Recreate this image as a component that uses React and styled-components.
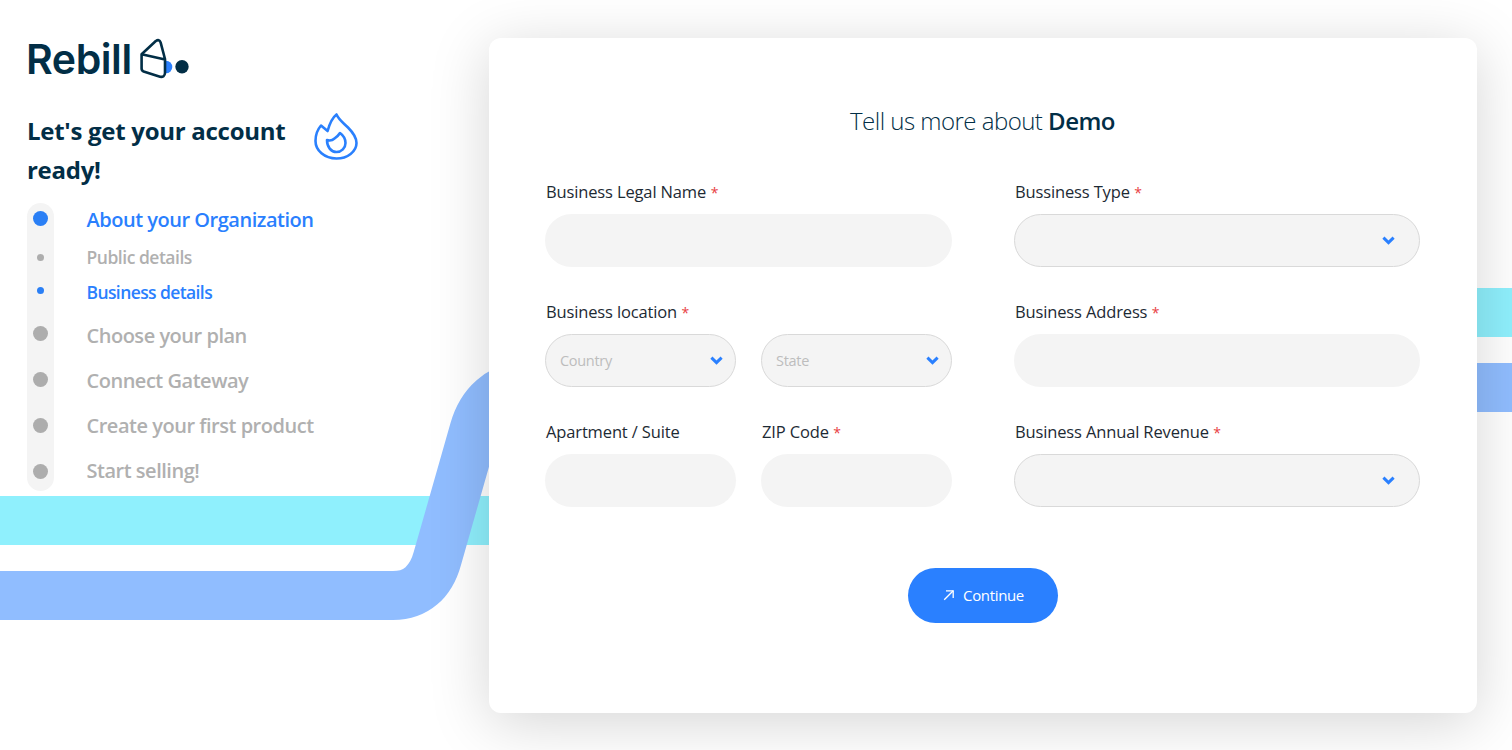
import React from 'react'
import styled, { createGlobalStyle } from 'styled-components'

const GlobalStyle = createGlobalStyle`
	html, body { margin: 0; padding: 0; background: #fff; }
	body { font-family: "Open Sans", "Noto Sans", sans-serif; color: #022e46; }
	* { box-sizing: border-box; }
`

const Page = styled.div`
	position: relative;
	width: 1512px;
	height: 750px;
	overflow: hidden;
	display: flex;
`

const Bands = styled.svg`
	position: absolute;
	top: 0;
	left: 0;
`

const Sidebar = styled.aside`
	position: relative;
	width: 489px;
	padding: 36px 0 0 27px;
`

const Logo = styled.div`
	display: flex;
	align-items: flex-start;
	height: 43px;
`

const LogoWord = styled.span`
	margin-left: -1px;
	font-family: Inter, sans-serif;
	font-weight: 600;
	font-size: 41px;
	line-height: 46px;
	letter-spacing: -0.42px;
	color: #022e46;
`

const LogoSvg = styled.svg`
	margin: 1px 0 0 6px;
`

const Intro = styled.div`
	display: flex;
	align-items: flex-start;
	margin-top: 32px;
`

const Heading = styled.h1`
	margin: 0;
	width: 285px;
	font-size: 24px;
	line-height: 39px;
	font-weight: 700;
	letter-spacing: -0.28px;
	color: #022e46;
`

const FlameSvg = styled.svg`
	margin-top: 1px;
`

const Steps = styled.div`
	display: flex;
	margin-top: 14px;
`

const Rail = styled.div`
	width: 27px;
	height: 288px;
	border-radius: 14px;
	background: #f4f4f4;
	display: flex;
	flex-direction: column;
	align-items: center;
	padding-top: 8px;
`

const Dot = styled.span`
	display: block;
	flex: none;
	width: ${p => p.$small ? 7 : 15}px;
	height: ${p => p.$small ? 7 : 15}px;
	margin-top: ${p => p.$gap}px;
	border-radius: 50%;
	background: ${p => p.$active ? '#2a7ff5' : '#adadad'};
`

const Labels = styled.div`
	margin-left: 32.5px;
	padding-top: 2px;
	display: flex;
	flex-direction: column;
`

const StepLabel = styled.div`
	height: ${p => p.$height}px;
	line-height: 30px;
	font-size: ${p => p.$sub ? 17.5 : 20}px;
	font-weight: 600;
	letter-spacing: ${p => p.$active && p.$sub ? -0.6 : -0.48}px;
	white-space: nowrap;
	color: ${p => p.$active ? '#2a7ffe' : '#b0b0b0'};
`

const Card = styled.main`
	position: relative;
	width: 988px;
	height: 675px;
	margin-top: 38px;
	padding: 66px 57px 0 56px;
	background: #fff;
	border-radius: 12px;
	box-shadow: 0 10px 60px rgba(0, 0, 0, 0.17);
	display: flex;
	flex-direction: column;
	align-items: stretch;
`

const Title = styled.h2`
	margin: 0;
	height: 34px;
	text-align: center;
	font-size: 24px;
	line-height: 34px;
	font-weight: 300;
	letter-spacing: -0.52px;
	color: #022e46;
	b { font-weight: 600; }
`

const FormGrid = styled.div`
	margin-top: 39px;
	display: grid;
	grid-template-columns: 407px 406px;
	column-gap: 62px;
	row-gap: 30px;
`

const Split = styled.div`
	display: grid;
	grid-template-columns: 191px 191px;
	column-gap: 25px;
`

const Field = styled.div`
	display: flex;
	flex-direction: column;
	min-width: 0;
`

const Label = styled.label`
	display: block;
	height: 37px;
	padding: 2px 0 0 1px;
	line-height: 26px;
	font-size: 16.5px;
	letter-spacing: -0.14px;
	color: #1d2a34;
	span { color: #e8403f; font-size: 14px; margin-left: 1px; }
`

const TextInput = styled.input`
	display: block;
	width: 100%;
	height: 53px;
	border: none;
	outline: none;
	border-radius: 27px;
	background: #f4f4f4;
	padding: 0 15px;
	font: inherit;
`

const SelectBox = styled.div`
	display: flex;
	align-items: center;
	justify-content: space-between;
	height: 53px;
	border: 1px solid #d9d9d9;
	border-radius: 27px;
	background: #f4f4f4;
	padding: 0 ${p => p.$wide ? 24 : 12}px 0 14px;
	font-size: 14.5px;
	letter-spacing: -0.3px;
	color: #bdbdbd;
`

const Actions = styled.div`
	display: flex;
	justify-content: center;
	margin-top: 61px;
`

const ContinueButton = styled.button`
	display: flex;
	align-items: center;
	justify-content: center;
	gap: 8px;
	width: 150px;
	height: 55px;
	padding: 0 0 1px 2px;
	border: none;
	border-radius: 28px;
	background: #2a80ff;
	color: #fff;
	font-family: inherit;
	font-size: 15px;
	letter-spacing: -0.35px;
	cursor: pointer;
`

const Chevron = () => (
	<svg width="13" height="9" viewBox="0 0 13 9" fill="none">
		<path d="M1.4 1.6 L6.5 6.6 L11.6 1.6" stroke="#2a80ff" strokeWidth="3" />
	</svg>
)

const ArrowUpRight = () => (
	<svg width="12" height="12" viewBox="0 0 12 12" fill="none" stroke="#fff" strokeWidth="1.3">
		<path d="M1.2 10.8 L10.2 1.8" />
		<path d="M3 1.8 H10.2 V9" />
	</svg>
)

const LogoMark = () => (
	<LogoSvg width="56" height="42" viewBox="0 0 56 42" fill="none">
		<path d="M28 23.7 A6.3 6.3 0 0 1 28 36.3 Z" fill="#2a80ff" />
		<path
			d="M3.6 17.2 L17.8 4 Q21.2 1.8 22.6 5.4 L27 22 V36 Q26.6 40.6 22 39.8 L5.6 34.6 Q3.6 33.8 3.6 31.6 Z M3.6 17.2 L27 22.6"
			stroke="#022e46"
			strokeWidth="2.6"
			strokeLinejoin="round"
		/>
		<circle cx="44" cy="29.7" r="6.7" fill="#022e46" />
	</LogoSvg>
)

const Flame = () => (
	<FlameSvg width="46" height="48" viewBox="0 0 46 48" fill="none" stroke="#2a80fd" strokeWidth="2.6" strokeLinejoin="round" strokeLinecap="round">
		<path d="M9 13.5 L15.6 19 C17.5 12 20 6 24.5 2.5 C27 8 31 10.5 36 15.5 C41 20.5 44.5 25 44.5 31 C44.5 39.5 35.5 46.5 24.5 46.5 C12.5 46.5 3.5 38.5 3.5 29 C3.5 22.5 5.5 17.5 9 13.5 Z" />
		<path d="M15 28 C17.5 28.8 20.5 28.3 22.5 26.5 C24.5 25 26.5 23.5 28 21 C31.5 23.5 33.5 27 33.5 31 C33.5 36 29.5 40 24.5 40 C19 40 15 35 15 28 Z" />
	</FlameSvg>
)

const steps = [
	{ label: 'About your Organization', gap: 0, height: 37, active: true },
	{ label: 'Public details', gap: 28, height: 35, small: true, sub: true },
	{ label: 'Business details', gap: 26, height: 44, small: true, sub: true, active: true },
	{ label: 'Choose your plan', gap: 32, height: 45 },
	{ label: 'Connect Gateway', gap: 31, height: 45 },
	{ label: 'Create your first product', gap: 31, height: 45 },
	{ label: 'Start selling!', gap: 31, height: 45 },
]

const Required = () => <span> *</span>

const App = () => (
	<Page>
		<GlobalStyle />
		<Bands width="1512" height="750" viewBox="0 0 1512 750" fill="none">
			<path d="M-10 520.5 H600 C700 520.5 800 312.5 900 312.5 H1520" stroke="#8ff0fd" strokeWidth="49" />
			<path d="M-10 595.5 H393 C416 595.5 431 582 437.5 558 L474 430 C481 405 499 386 528 386 L600 387.5 H1520" stroke="#90bdff" strokeWidth="49" />
		</Bands>

		<Sidebar>
			<Logo>
				<LogoWord>Rebill</LogoWord>
				<LogoMark />
			</Logo>
			<Intro>
				<Heading>Let's get your account ready!</Heading>
				<Flame />
			</Intro>
			<Steps>
				<Rail>
					{steps.map(s => <Dot key={s.label} $gap={s.gap} $small={s.small} $active={s.active} />)}
				</Rail>
				<Labels>
					{steps.map(s => (
						<StepLabel key={s.label} $height={s.height} $sub={s.sub} $active={s.active}>{s.label}</StepLabel>
					))}
				</Labels>
			</Steps>
		</Sidebar>

		<Card>
			<Title>Tell us more about <b>Demo</b></Title>
			<FormGrid>
				<Field>
					<Label>Business Legal Name<Required /></Label>
					<TextInput />
				</Field>
				<Field>
					<Label>Bussiness Type<Required /></Label>
					<SelectBox $wide><i /><Chevron /></SelectBox>
				</Field>
				<Field>
					<Label>Business location<Required /></Label>
					<Split>
						<SelectBox>Country<Chevron /></SelectBox>
						<SelectBox>State<Chevron /></SelectBox>
					</Split>
				</Field>
				<Field>
					<Label>Business Address<Required /></Label>
					<TextInput />
				</Field>
				<Split>
					<Field>
						<Label>Apartment / Suite</Label>
						<TextInput />
					</Field>
					<Field>
						<Label>ZIP Code<Required /></Label>
						<TextInput />
					</Field>
				</Split>
				<Field>
					<Label>Business Annual Revenue<Required /></Label>
					<SelectBox $wide><i /><Chevron /></SelectBox>
				</Field>
			</FormGrid>
			<Actions>
				<ContinueButton><ArrowUpRight />Continue</ContinueButton>
			</Actions>
		</Card>
	</Page>
)

export default App
